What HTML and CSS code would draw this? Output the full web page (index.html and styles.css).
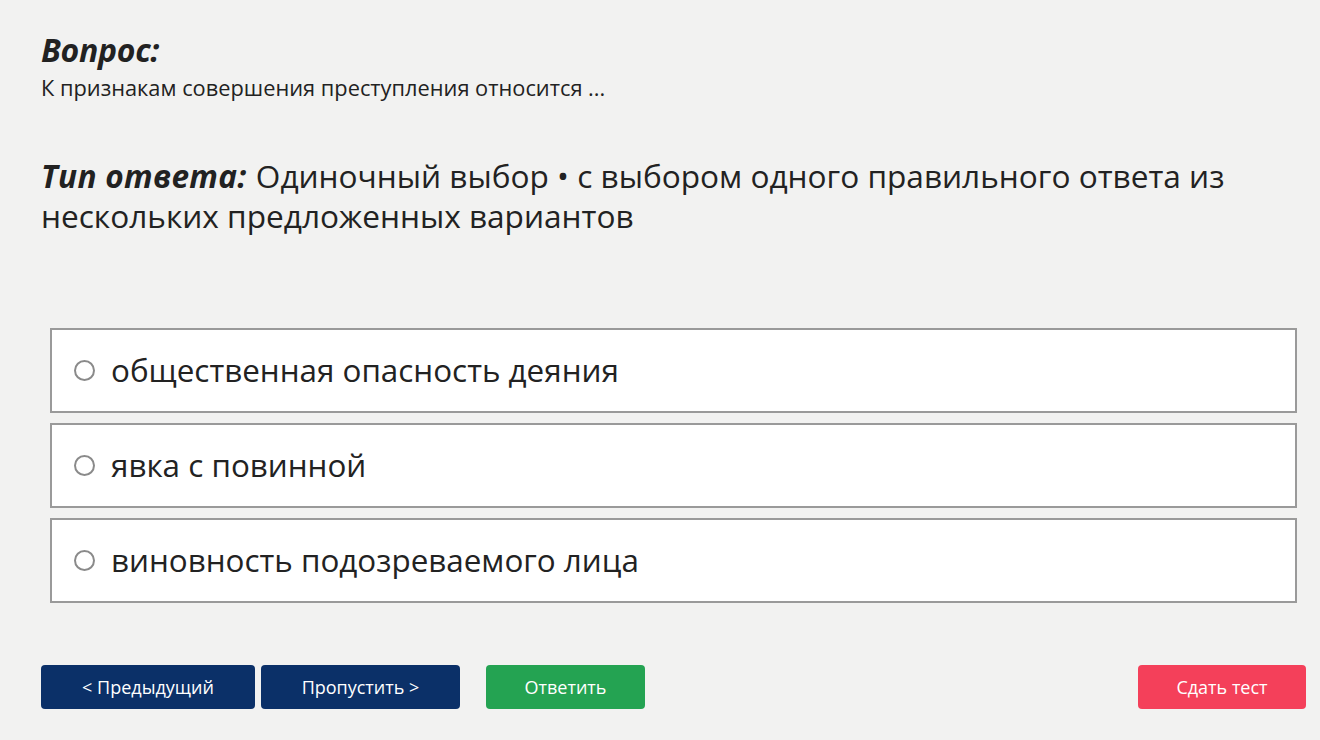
FILE: index.html
```html
<!DOCTYPE html>
<html lang="ru">
<head>
<meta charset="utf-8">
<title>Вопрос</title>
<link rel="stylesheet" href="styles.css">
</head>
<body>
<main class="page">
  <section class="question">
    <h2 class="q-title">Вопрос:</h2>
    <p class="q-text">К признакам совершения преступления относится ...</p>
  </section>
  <p class="q-type"><b>Тип ответа:</b> Одиночный выбор • с выбором одного правильного ответа из нескольких предложенных вариантов</p>
  <div class="options">
    <label class="option"><span class="radio"></span><span class="opt-text">общественная опасность деяния</span></label>
    <label class="option"><span class="radio"></span><span class="opt-text">явка с повинной</span></label>
    <label class="option"><span class="radio"></span><span class="opt-text">виновность подозреваемого лица</span></label>
  </div>
  <div class="actions">
    <button class="btn btn-navy btn-prev">&lt; Предыдущий</button>
    <button class="btn btn-navy btn-skip">Пропустить &gt;</button>
    <button class="btn btn-green btn-answer">Ответить</button>
    <span class="spacer"></span>
    <button class="btn btn-red btn-finish">Сдать тест</button>
  </div>
</main>
</body>
</html>
```

FILE: styles.css
```css
html, body {
  margin: 0;
  padding: 0;
  background: #f2f2f1;
  font-family: "Open Sans", "Noto Sans", sans-serif;
  color: #222;
}
.page {
  padding: 30px 14px 0 41px;
  height: 740px;
  box-sizing: border-box;
}
.question {
  margin: 0;
}
.q-title {
  margin: 0;
  font-size: 32px;
  font-weight: 700;
  font-style: italic;
  line-height: 40px;
  letter-spacing: -0.3px;
}
.q-text {
  margin: 3px 0 0 0;
  font-size: 21.8px;
  line-height: 30px;
}
.q-type {
  margin: 53px 0 0 0;
  font-size: 31.6px;
  line-height: 40px;
  max-width: 1230px;
}
.q-type b {
  font-weight: 700;
  font-style: italic;
  letter-spacing: 0.3px;
  margin-right: 1px;
}
.options {
  margin: 92px 9px 0 9px;
  display: flex;
  flex-direction: column;
  gap: 10px;
}
.option {
  display: flex;
  align-items: center;
  height: 85px;
  box-sizing: border-box;
  background: #fff;
  border: 2px solid #9a9a9a;
  padding-left: 22px;
  padding-bottom: 2px;
}
.radio {
  width: 21px;
  height: 21px;
  box-sizing: border-box;
  border: 2px solid #8a8a8a;
  border-radius: 50%;
  margin-right: 16px;
  margin-top: 1px;
  flex: none;
}
.opt-text {
  font-size: 31.4px;
  color: #222;
}
.actions {
  margin-top: 62px;
  display: flex;
  align-items: center;
  gap: 6px;
}
.btn {
  height: 44px;
  border: none;
  border-radius: 4px;
  color: #fff;
  font-family: "Open Sans", "Noto Sans", sans-serif;
  font-size: 18px;
  padding: 0;
  cursor: pointer;
}
.btn-navy { background: #0b3068; }
.btn-green { background: #24a352; }
.btn-red { background: #f4405a; }
.btn-prev { width: 214px; }
.btn-skip { width: 199px; }
.btn-answer { width: 159px; margin-left: 20px; }
.spacer { flex: 1; }
.btn-finish { width: 168px; }
```
